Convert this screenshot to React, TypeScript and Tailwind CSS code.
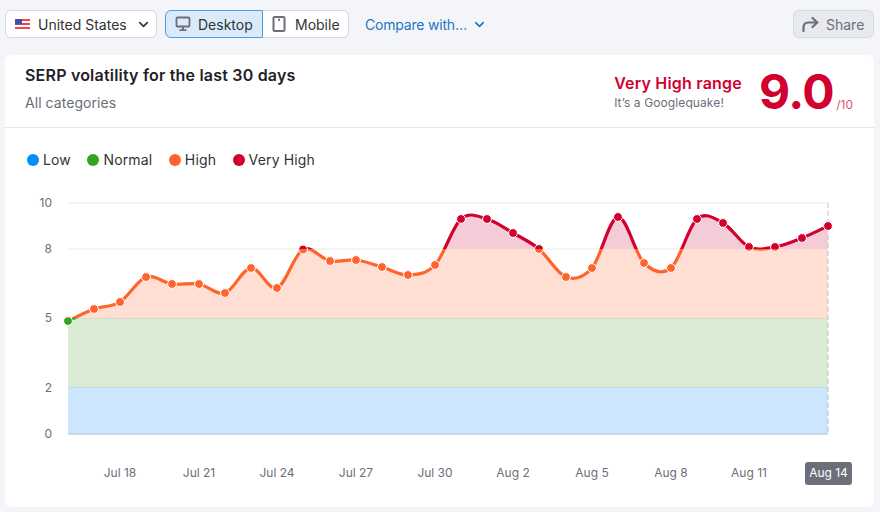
import { ChevronDown } from 'lucide-react';

const font = { fontFamily: 'Inter, "Liberation Sans", sans-serif' };

const points: [number, number][] = [
  [68, 321], [94, 309], [120, 302], [146, 277], [172, 284], [199, 284], [225, 293], [251, 268],
  [277, 288], [303, 249.5], [330, 261], [356, 260], [382, 267], [408, 275], [435, 265], [461, 219],
  [487, 219], [513, 233], [539, 249], [566, 277], [592, 268], [618, 217], [644, 263], [671, 268],
  [697, 219], [723, 223], [749, 247], [775, 247], [802, 238], [828, 226],
];

function splinePath(pts: [number, number][]) {
  let d = `M${pts[0][0]} ${pts[0][1]}`;
  for (let i = 0; i < pts.length - 1; i++) {
    const p0 = pts[i - 1] ?? pts[i];
    const p1 = pts[i];
    const p2 = pts[i + 1];
    const p3 = pts[i + 2] ?? p2;
    const c1x = p1[0] + (p2[0] - p0[0]) / 6;
    const c1y = p1[1] + (p2[1] - p0[1]) / 6;
    const c2x = p2[0] - (p3[0] - p1[0]) / 6;
    const c2y = p2[1] - (p3[1] - p1[1]) / 6;
    d += ` C${c1x} ${c1y} ${c2x} ${c2y} ${p2[0]} ${p2[1]}`;
  }
  return d;
}

const line = splinePath(points);
const area = `${line} L828 434 L68 434 Z`;

const zones = [
  { id: 'veryhigh', y: 190, h: 59, color: '#d1002f', fill: '#f4ccd7' },
  { id: 'high', y: 249, h: 69, color: '#ff642d', fill: '#ffdfd3' },
  { id: 'normal', y: 318, h: 69, color: '#35a51e', fill: '#d9ebd3' },
  { id: 'low', y: 387, h: 47, color: '#008ff8', fill: '#cce6ff' },
];

const xLabels = [
  ['Jul 18', 120], ['Jul 21', 199], ['Jul 24', 277], ['Jul 27', 356], ['Jul 30', 435],
  ['Aug 2', 513], ['Aug 5', 592], ['Aug 8', 671], ['Aug 11', 749],
] as const;

const legend = [
  { label: 'Low', color: 'bg-[#008ff8]' },
  { label: 'Normal', color: 'bg-[#35a51e]' },
  { label: 'High', color: 'bg-[#ff642d]' },
  { label: 'Very High', color: 'bg-[#d1002f]' },
];

function Chart() {
  return (
    <svg viewBox="5 190 869 300" className="block h-[300px] w-[869px]" style={font}>
      <defs>
        {zones.map((z) => (
          <clipPath id={z.id} key={z.id}>
            <rect x="50" y={z.y} width="800" height={z.h} />
          </clipPath>
        ))}
      </defs>

      <line x1="68" x2="828" y1="203" y2="203" stroke="#e8e9ef" />
      <line x1="68" x2="828" y1="249" y2="249" stroke="#e8e9ef" />

      {zones.map((z) => (
        <g clipPath={`url(#${z.id})`} key={z.id}>
          <path d={area} fill={z.fill} />
        </g>
      ))}
      <line x1="68" x2="828" y1="318.5" y2="318.5" stroke="#d3e0c9" />
      <line x1="68" x2="828" y1="387.5" y2="387.5" stroke="#c2dbe0" />
      <line x1="68" x2="828" y1="434" y2="434" stroke="#bcd0e4" strokeWidth="1.5" />
      <line x1="828" x2="828" y1="203" y2="434" stroke="#c1c3cb" strokeWidth="1" strokeDasharray="5 3" />

      {zones.map((z) => (
        <g clipPath={`url(#${z.id})`} key={z.id}>
          <path d={line} fill="none" stroke={z.color} strokeWidth="3.2" strokeLinejoin="round" />
          {points.map(([x, y]) => (
            <circle key={x} cx={x} cy={y} r="4.4" fill={z.color} stroke="#fff" strokeWidth="1" />
          ))}
        </g>
      ))}

      <g fontSize="12" fill="#6c6e79" textAnchor="end">
        <text x="52" y="207">10</text>
        <text x="52" y="253">8</text>
        <text x="52" y="322">5</text>
        <text x="52" y="392">2</text>
        <text x="52" y="438">0</text>
      </g>
      <g fontSize="12" fill="#6c6e79" textAnchor="middle">
        {xLabels.map(([label, x]) => (
          <text key={label} x={x} y="477">{label}</text>
        ))}
      </g>
      <rect x="805" y="462" width="47" height="23" rx="3" fill="#6c6e79" />
      <text x="828.5" y="477" fontSize="12" fill="#fff" textAnchor="middle">Aug 14</text>
    </svg>
  );
}

export default function App() {
  return (
    <div className="flex h-[512px] w-[880px] flex-col overflow-hidden bg-[#f4f5f9] pl-[5px] pr-[6px] pt-[10px] text-[14px] text-[#333]" style={font}>
      <div className="flex h-[28px] items-center">
        <button className="flex h-full w-[152px] items-center rounded-md border border-[#d7d9e0] bg-white pl-[9px]">
          <svg width="15" height="10" viewBox="0 0 15 10" className="mr-[8px]">
            <rect width="15" height="10" fill="#fff" />
            <rect width="15" height="2" fill="#f2444d" />
            <rect y="4" width="15" height="2" fill="#f2444d" />
            <rect y="8" width="15" height="2" fill="#f2444d" />
            <rect width="7" height="5.5" fill="#3f51a3" />
          </svg>
          <span>United States</span>
          <ChevronDown size={15} strokeWidth={2.6} className="ml-[9px]" />
        </button>

        <div className="ml-[8px] flex h-full">
          <button className="flex w-[98px] items-center rounded-l-md border border-[#4b9be0] bg-[#d9ebfb] pl-[9px]">
            <svg width="16" height="16" viewBox="0 0 16 16" fill="none" stroke="#6c6e79" strokeWidth="1.8" className="mr-[7px]">
              <rect x="1.5" y="1.5" width="13" height="9" rx="1" />
              <path d="M8 11v3M4.5 14.2h7" />
            </svg>
            <span>Desktop</span>
          </button>
          <button className="flex w-[86px] items-center rounded-r-md border border-l-0 border-[#d7d9e0] bg-white pl-[9px]">
            <svg width="14" height="16" viewBox="0 0 14 16" fill="none" stroke="#6c6e79" strokeWidth="2" className="mr-[9px]">
              <rect x="1.5" y="1" width="11" height="14" rx="1" />
              <path d="M6 3.8h2" />
            </svg>
            <span>Mobile</span>
          </button>
        </div>

        <button className="ml-[16px] flex items-center text-[#1d74c7]">
          <span className="tracking-[-0.2px]">Compare with…</span>
          <ChevronDown size={15} strokeWidth={2.6} className="ml-[5px]" />
        </button>

        <button className="ml-auto flex h-full w-[81px] items-center rounded-md border border-[#d7d9e0] bg-[#e9eaef] pl-[8px] text-[#6c6e79]">
          <svg width="17" height="15" viewBox="0 0 17 15" fill="none" stroke="#6c6e79" strokeWidth="2.2" strokeLinecap="round" className="mr-[7px]">
            <path d="M1.5 14V10.5C1.5 7.5 3.5 5.5 6.5 5.5H15" />
            <path d="M10.5 1L15.2 5.5L10.5 10" />
          </svg>
          <span>Share</span>
        </button>
      </div>

      <div className="mt-[17px] flex h-[452px] flex-col rounded-md bg-white">
        <div className="flex h-[73px] shrink-0 justify-between border-b border-[#e5e6ec] pl-[20px]">
          <div className="pt-[10px]">
            <div className="text-[16px] font-semibold leading-[20px] tracking-[0.2px] text-[#1f2126]">SERP volatility for the last 30 days</div>
            <div className="mt-[8px] leading-[20px] tracking-[0.05px] text-[#6c6e79]">All categories</div>
          </div>
          <div className="flex pr-[21px]">
            <div className="pt-[18px]">
              <div className="text-[16px] font-semibold leading-[20px] tracking-[0.2px] text-[#d1002f]">Very High range</div>
              <div className="text-[12px] leading-[20px] tracking-[0.1px] text-[#6c6e79]">It’s a Googlequake!</div>
            </div>
            <div className="ml-[17px] pt-[8px] text-[48px] font-bold leading-[58px] tracking-[-0.5px] text-[#d1002f]">9.0</div>
            <div className="ml-[2px] pt-[42px] text-[12px] leading-[16px] text-[#e0546f]">/10</div>
          </div>
        </div>

        <div className="flex h-[62px] shrink-0 items-start gap-[16.5px] pl-[22px] pt-[23px]">
          {legend.map((item) => (
            <div key={item.label} className="flex items-center gap-[4px] leading-[18px] tracking-[0.15px]">
              <span className={`h-[12px] w-[12px] rounded-full ${item.color}`} />
              <span>{item.label}</span>
            </div>
          ))}
        </div>

        <Chart />
      </div>
    </div>
  );
}
